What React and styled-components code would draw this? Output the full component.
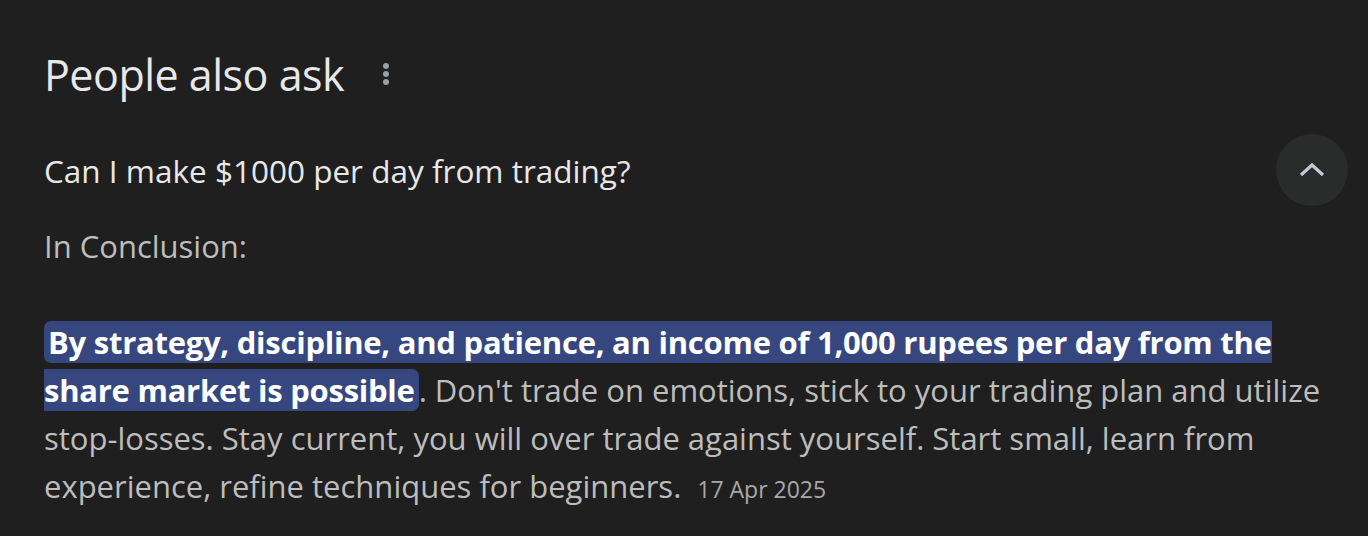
import React from 'react';
import styled, { createGlobalStyle } from 'styled-components';

const GlobalStyle = createGlobalStyle`
  html, body {
    margin: 0;
    padding: 0;
    background: #1f1f1f;
  }
  body {
    font-family: "Open Sans", "Noto Sans", sans-serif;
  }
`;

const Page = styled.div`
  width: 1368px;
  height: 536px;
  box-sizing: border-box;
  padding: 46px 20px 0 44px;
  background: #1f1f1f;
  overflow: hidden;
`;

const Header = styled.div`
  display: flex;
  align-items: center;
  gap: 30px;
  height: 56px;
`;

const Title = styled.h2`
  margin: 0;
  font-size: 43px;
  font-weight: 400;
  color: #e8e8e8;
  letter-spacing: -0.5px;
`;

const MenuButton = styled.button`
  display: flex;
  align-items: center;
  justify-content: center;
  width: 24px;
  height: 32px;
  padding: 0;
  border: none;
  background: none;
`;

const QuestionRow = styled.div`
  display: flex;
  align-items: center;
  justify-content: space-between;
  margin-top: 32px;
`;

const Question = styled.div`
  font-size: 31.5px;
  color: #e8e8e8;
`;

const ToggleButton = styled.button`
  display: flex;
  align-items: center;
  justify-content: center;
  width: 72px;
  height: 72px;
  padding: 0;
  border: none;
  border-radius: 50%;
  background: #2a2c2c;
`;

const Answer = styled.div`
  margin-top: 16px;
  padding-right: 25px;
  font-size: 31px;
  line-height: 48px;
  color: #bdbdbd;
`;

const Lead = styled.p`
  margin: 0 0 48px;
`;

const Body = styled.p`
  margin: 0;
`;

const Highlight = styled.span`
  padding: 0 4px;
  border-radius: 7px;
  background: #36477f;
  color: #ffffff;
  font-weight: 700;
  letter-spacing: -0.25px;
`;

const Date = styled.span`
  margin-left: 16px;
  font-size: 23px;
  color: #a8a8a8;
`;

export default function App() {
  return (
    <Page>
      <GlobalStyle />
      <Header>
        <Title>People also ask</Title>
        <MenuButton aria-label="More options">
          <svg width="8" height="22" viewBox="0 0 8 22">
            <circle cx="4" cy="3" r="3" fill="#9aa0a6" />
            <circle cx="4" cy="11" r="3" fill="#9aa0a6" />
            <circle cx="4" cy="19" r="3" fill="#9aa0a6" />
          </svg>
        </MenuButton>
      </Header>
      <QuestionRow>
        <Question>Can I make $1000 per day from trading?</Question>
        <ToggleButton aria-label="Collapse">
          <svg width="26" height="16" viewBox="0 0 26 16">
            <path d="M2 13 L13 3 L24 13" fill="none" stroke="#c5c8d8" strokeWidth="3.2" />
          </svg>
        </ToggleButton>
      </QuestionRow>
      <Answer>
        <Lead>In Conclusion:</Lead>
        <Body>
          <Highlight>
            By strategy, discipline, and patience, an income of 1,000 rupees per day from the share market is possible
          </Highlight>
          . Don't trade on emotions, stick to your trading plan and utilize stop-losses. Stay current, you will over
          trade against yourself. Start small, learn from experience, refine techniques for beginners.
          <Date>17 Apr 2025</Date>
        </Body>
      </Answer>
    </Page>
  );
}
